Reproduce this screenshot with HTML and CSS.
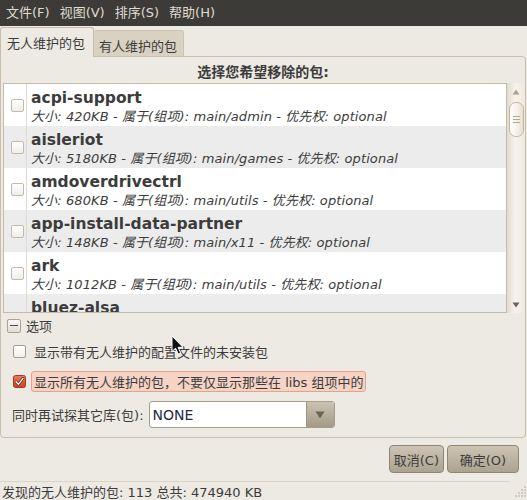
FILE: index.html
```html
<!DOCTYPE html>
<html>
<head>
<meta charset="utf-8">
<title>无人维护的包</title>
<link rel="stylesheet" href="styles.css">
</head>
<body>
<div class="window">
  <div class="menubar">
    <span class="menu">文件(F)</span>
    <span class="menu">视图(V)</span>
    <span class="menu">排序(S)</span>
    <span class="menu">帮助(H)</span>
  </div>
  <div class="tabs">
    <div class="tab tab-active">无人维护的包</div>
    <div class="tab tab-inactive">有人维护的包</div>
  </div>
  <div class="panel">
    <div class="heading">选择您希望移除的包:</div>
    <div class="listarea">
      <div class="list">
        <div class="row">
          <div class="cbcell"><span class="cb"></span></div>
          <div class="info"><div class="name">acpi-support</div><div class="meta">大小: 420KB - 属于(组项): main/admin - 优先权: optional</div></div>
        </div>
        <div class="row row-alt">
          <div class="cbcell"><span class="cb"></span></div>
          <div class="info"><div class="name">aisleriot</div><div class="meta">大小: 5180KB - 属于(组项): main/games - 优先权: optional</div></div>
        </div>
        <div class="row">
          <div class="cbcell"><span class="cb"></span></div>
          <div class="info"><div class="name">amdoverdrivectrl</div><div class="meta">大小: 680KB - 属于(组项): main/utils - 优先权: optional</div></div>
        </div>
        <div class="row row-alt">
          <div class="cbcell"><span class="cb"></span></div>
          <div class="info"><div class="name">app-install-data-partner</div><div class="meta">大小: 148KB - 属于(组项): main/x11 - 优先权: optional</div></div>
        </div>
        <div class="row">
          <div class="cbcell"><span class="cb"></span></div>
          <div class="info"><div class="name">ark</div><div class="meta">大小: 1012KB - 属于(组项): main/utils - 优先权: optional</div></div>
        </div>
        <div class="row row-alt row-last">
          <div class="cbcell"></div>
          <div class="info"><div class="name">bluez-alsa</div></div>
        </div>
      </div>
      <div class="scrollbar">
        <div class="sb-arrow">
          <svg width="8" height="6" viewBox="0 0 8 6"><path d="M4 0.5 L7.5 5.5 L0.5 5.5 Z" fill="#aaa18e"/></svg>
        </div>
        <div class="thumb">
          <span class="grip"></span><span class="grip"></span><span class="grip"></span>
        </div>
        <div class="sb-space"></div>
        <div class="sb-arrow">
          <svg width="8" height="6" viewBox="0 0 8 6"><path d="M0.5 0.5 L7.5 0.5 L4 5.5 Z" fill="#6a6558"/></svg>
        </div>
      </div>
    </div>
    <div class="options">
      <div class="expander">
        <span class="exp-box"><span class="exp-minus"></span></span>
        <span class="exp-label">选项</span>
      </div>
      <div class="check-row">
        <span class="cb cb-opt"></span>
        <span class="check-label">显示带有无人维护的配置文件的未安装包</span>
      </div>
      <div class="check-row">
        <span class="cb-checked">
          <svg width="13" height="13" viewBox="0 0 13 13">
            <defs>
              <linearGradient id="red" x1="0" y1="0" x2="0" y2="1">
                <stop offset="0" stop-color="#ec7a58"/>
                <stop offset="1" stop-color="#cf3f22"/>
              </linearGradient>
            </defs>
            <rect x="0.5" y="0.5" width="12" height="12" rx="2" fill="url(#red)" stroke="#a9381f"/>
            <path d="M3 6.8 L5.4 9.4 L10 3.4" fill="none" stroke="#5a1a0c" stroke-width="2.6" stroke-linecap="round" stroke-linejoin="round"/>
            <path d="M3 6.8 L5.4 9.4 L10 3.4" fill="none" stroke="#ffffff" stroke-width="1.4" stroke-linecap="round" stroke-linejoin="round"/>
          </svg>
        </span>
        <span class="check-label check-label-hl">显示所有无人维护的包，不要仅显示那些在 libs 组项中的</span>
      </div>
      <div class="combo-row">
        <span class="combo-label">同时再试探其它库(包):</span>
        <div class="combo">
          <span class="combo-text">NONE</span>
          <span class="combo-btn">
            <svg width="10" height="8" viewBox="0 0 10 8"><path d="M0.5 0.5 L9.5 0.5 L5 7.5 Z" fill="#6c6455"/></svg>
          </span>
        </div>
      </div>
    </div>
  </div>
  <div class="buttons">
    <span class="btn">取消(C)</span>
    <span class="btn btn-ok">确定(O)</span>
  </div>
  <div class="separator"></div>
  <div class="status">
    <span class="status-text">发现的无人维护的包: 113 总共: 474940 KB</span>
    <svg class="grip-corner" width="16" height="15" viewBox="0 0 16 15">
      <g fill="#d2cbbd">
        <rect x="13" y="2" width="2" height="2"/>
        <rect x="10" y="5" width="2" height="2"/><rect x="13" y="5" width="2" height="2"/>
        <rect x="7" y="8" width="2" height="2"/><rect x="10" y="8" width="2" height="2"/><rect x="13" y="8" width="2" height="2"/>
        <rect x="4" y="11" width="2" height="2"/><rect x="7" y="11" width="2" height="2"/><rect x="10" y="11" width="2" height="2"/><rect x="13" y="11" width="2" height="2"/>
      </g>
    </svg>
  </div>
  <svg class="cursor" width="14" height="21" viewBox="0 0 14 21">
    <path d="M1 1 L1 16.5 L4.6 13.2 L7.2 19 L9.6 17.9 L7.1 12.3 L12 12.3 Z" fill="#111" stroke="#fff" stroke-width="1" stroke-linejoin="round"/>
  </svg>
</div>
</body>
</html>
```
FILE: styles.css
```css
* { box-sizing: border-box; }

html, body {
  margin: 0;
  padding: 0;
  background: #edeae3;
}

body {
  font-family: "DejaVu Sans", "Noto Sans CJK SC", sans-serif;
  font-size: 13px;
  color: #3c3c3c;
}

.window {
  position: relative;
  width: 527px;
  height: 500px;
  overflow: hidden;
  background: #edeae3;
}

/* menu bar */
.menubar {
  height: 26px;
  background: #3c3b37;
  display: flex;
  align-items: center;
  padding-left: 1px;
}
.menu {
  color: #dfdbd2;
  padding: 0 5px;
  line-height: 26px;
}

/* tabs */
.tabs {
  height: 31px;
  margin-bottom: -1px;
  display: flex;
  align-items: flex-end;
  position: relative;
  z-index: 1;
}
.tab {
  display: flex;
  align-items: center;
  border: 1px solid #c6bdaa;
  border-bottom: none;
  border-radius: 3px 3px 0 0;
  white-space: nowrap;
}
.tab-active {
  height: 30px;
  padding: 0 8px 1px 6px;
  background: #edeae3;
}
.tab-inactive {
  height: 26px;
  margin-bottom: 1px;
  padding: 3px 6px 0 5px;
  background: #d9d1c1;
  border-color: #cbc2b0;
  border-left: none;
}

/* notebook panel */
.panel {
  width: 526px;
  height: 382px;
  border: 1px solid #c9bfad;
  border-radius: 0 4px 4px 4px;
  background: #edeae3;
  display: flex;
  flex-direction: column;
}
.heading {
  height: 26px;
  display: flex;
  align-items: center;
  justify-content: center;
  font-weight: bold;
  font-size: 14px;
  padding-top: 1px;
}

/* list + scrollbar */
.listarea {
  height: 230px;
  display: flex;
  margin-left: 2px;
}
.list {
  width: 504px;
  height: 230px;
  border: 1px solid #c4bba8;
  background: #ffffff;
  overflow: hidden;
}
.row {
  height: 42px;
  display: flex;
  background: #ffffff;
}
.row-alt { background: #ececec; }
.row-last { height: 18px; overflow: hidden; }
.cbcell {
  width: 23px;
  flex: none;
  border-right: 1px solid #dedbd5;
  display: flex;
  align-items: center;
  padding-left: 7px;
}
.cb {
  display: block;
  width: 13px;
  height: 13px;
  border: 1px solid #c2baaa;
  border-radius: 2px;
  background: linear-gradient(#ffffff, #f1eee9);
}
.info {
  padding: 5px 0 0 4px;
  white-space: nowrap;
}
.name {
  font-weight: bold;
  font-size: 15.5px;
  line-height: 19px;
}
.meta {
  font-style: italic;
  font-size: 13px;
  line-height: 17px;
  letter-spacing: 0.1px;
}

.scrollbar {
  width: 18px;
  height: 230px;
  display: flex;
  flex-direction: column;
  align-items: center;
  background: linear-gradient(to right, #e2dbcd, #f6f3ee 45%, #eee9e0);
}
.sb-arrow {
  height: 17px;
  width: 100%;
  display: flex;
  align-items: center;
  justify-content: center;
  padding-right: 1px;
}
.thumb {
  margin-top: 2px;
  width: 15px;
  height: 35px;
  border: 1px solid #c4b698;
  border-radius: 7px;
  background: linear-gradient(to right, #ffffff, #f4f0e8 60%, #e6dfd1);
  display: flex;
  flex-direction: column;
  align-items: center;
  justify-content: center;
  gap: 2px;
}
.grip {
  display: block;
  width: 7px;
  height: 1px;
  background: #b3a98f;
}
.sb-space { flex: 1; }

/* options */
.options {
  display: flex;
  flex-direction: column;
  padding-left: 6px;
}
.expander {
  margin-top: 5px;
  height: 15px;
  display: flex;
  align-items: center;
}
.exp-box {
  width: 14px;
  height: 14px;
  border: 1px solid #aaa394;
  border-radius: 2px;
  background: linear-gradient(#fbfaf8, #e2dcd1);
  display: flex;
  align-items: center;
  justify-content: center;
}
.exp-minus {
  display: block;
  width: 8px;
  height: 1.5px;
  background: #4a4a4a;
}
.exp-label { margin-left: 5px; }

.check-row {
  margin-top: 7px;
  height: 22px;
  display: flex;
  align-items: center;
  padding-left: 6px;
}
.check-row + .check-row { margin-top: 8px; }
.cb-opt { border-color: #a39c8d; }
.cb-checked {
  display: block;
  width: 13px;
  height: 13px;
}
.cb-checked svg { display: block; }
.check-label {
  margin-left: 5px;
  padding: 0 1px 0 2px;
  border: 1px solid transparent;
  border-radius: 3px;
  height: 21px;
  display: flex;
  align-items: center;
  white-space: nowrap;
}
.check-label-hl {
  background: #f5d3c5;
  border-color: #e9a08a;
}

.combo-row {
  margin-top: 9px;
  height: 27px;
  display: flex;
  align-items: center;
  padding-left: 5px;
}
.combo-label {
  white-space: nowrap;
  margin-right: 5px;
}
.combo {
  width: 186px;
  height: 27px;
  border: 1px solid #a69e8d;
  border-radius: 3px;
  background: #ffffff;
  display: flex;
  overflow: hidden;
}
.combo-text {
  flex: 1;
  display: flex;
  align-items: center;
  padding-left: 3px;
  font-size: 14px;
  color: #1f2a44;
}
.combo-btn {
  width: 28px;
  border-left: 1px solid #9c9483;
  background: linear-gradient(#cbc2b2, #a49a88);
  display: flex;
  align-items: center;
  justify-content: center;
}

/* dialog buttons */
.buttons {
  margin-top: 7px;
  height: 28px;
  display: flex;
  justify-content: flex-end;
  gap: 3px;
  padding-right: 8px;
}
.btn {
  height: 28px;
  padding: 0 4px;
  border: 1px solid #8f8574;
  border-radius: 4px;
  background: linear-gradient(#cdc4b5, #aca290);
  display: flex;
  align-items: center;
  justify-content: center;
  white-space: nowrap;
}
.btn-ok { min-width: 72px; }

.separator {
  margin-top: 8px;
  width: 510px;
  height: 1px;
  background: #dbd5c9;
}

.status {
  height: 18px;
  display: flex;
  align-items: center;
  justify-content: space-between;
  padding-left: 2px;
}
.status-text { white-space: nowrap; }
.grip-corner { display: block; }

.cursor {
  position: absolute;
  left: 171px;
  top: 335px;
}
```
